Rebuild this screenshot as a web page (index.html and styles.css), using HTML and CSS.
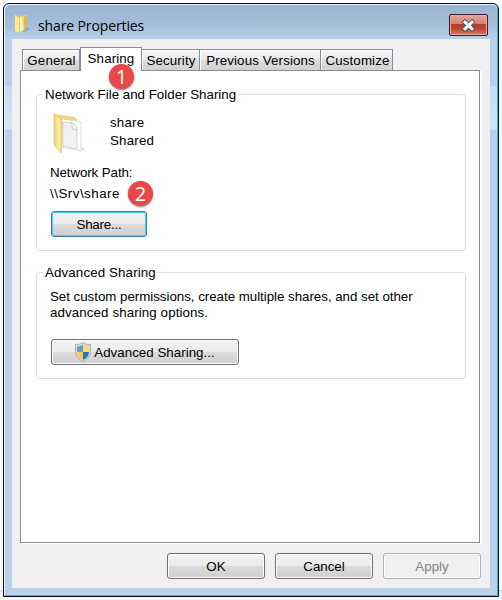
FILE: index.html
```html
<!DOCTYPE html>
<html lang="en">
<head>
<meta charset="utf-8">
<title>share Properties</title>
<link rel="stylesheet" href="styles.css">
</head>
<body>
<main class="window">
  <header class="titlebar">
    <svg class="title-icon" width="17" height="20" viewBox="0 0 17 20">
      <path d="M1 1l6 1v16l-2 1-4-2z" fill="#e6c765"/>
      <path d="M1 1l4 3v15l-4-2z" fill="#fbe999"/>
      <path d="M6 3l3-1v14l-3 2z" fill="#fff3b5"/>
      <path d="M8 2l5-1v13l-4 3z" fill="#efd47c"/>
      <path d="M10 3l3-2v13l-3 2z" fill="#e1b84f"/>
      <path d="M13 13l3 2-5 3-2-1z" fill="#8faac5"/>
    </svg>
    <h1>share Properties</h1>
    <button class="close" aria-label="Close">
      <svg width="17" height="15" viewBox="0 0 17 15">
        <path d="M5 4.200l7 6.600M12 4.200l-7 6.600" stroke="#4d5366" stroke-width="5" stroke-linecap="square"/>
        <path d="M5 4.200l7 6.600M12 4.200l-7 6.600" stroke="#f5f5f5" stroke-width="3" stroke-linecap="square"/>
      </svg>
    </button>
  </header>
  <div class="client">
    <nav class="tabs">
      <button class="tab general">General</button>
      <button class="tab sharing active">Sharing<span class="badge badge-one">1</span></button>
      <button class="tab security">Security</button>
      <button class="tab versions">Previous Versions</button>
      <button class="tab customize">Customize</button>
    </nav>
    <section class="panel">
      <fieldset class="network">
        <legend>Network File and Folder Sharing</legend>
        <div class="resource">
          <svg width="32" height="42" viewBox="0 0 32 42">
            <defs><linearGradient id="gold"><stop stop-color="#ecd074"/><stop offset=".65" stop-color="#fbeeb0"/><stop offset="1" stop-color="#e8cb69"/></linearGradient></defs>
            <path d="M1 1l20 3 3 2v6l-16 3z" fill="#eed579"/>
            <path d="M9 6l15 2 4 1 0 29-20-4z" fill="#fff" stroke="#d2d2d2" stroke-width=".8"/>
            <path d="M10 9l9 1 5 7v19l-14-3z" fill="#f1f1f1" stroke="#ccc" stroke-width=".8"/>
            <path d="M17 9c3 2 2 5 2 7l5 1c0-3-3-7-7-8z" fill="#fff" stroke="#bbb" stroke-width=".8"/>
            <path d="M1 1l8 6v26l-1 7-7-8z" fill="url(#gold)" stroke="#dfc05f" stroke-width=".6"/>
            <path d="M29 34l3 2-4 2z" fill="#ddd"/>
          </svg>
          <p><span>share</span><br><span>Shared</span></p>
        </div>
        <p class="path-label">Network Path:</p>
        <p class="path"><span>\\Srv\share</span><b class="badge">2</b></p>
        <button class="button share">Share...</button>
      </fieldset>
      <fieldset class="advanced">
        <legend>Advanced Sharing</legend>
        <p><span class="line-one">Set custom permissions, create multiple shares, and set other</span><br><span class="line-two">advanced sharing options.</span></p>
        <button class="button advanced-button">
          <svg width="16" height="20" viewBox="0 0 16 20">
            <path d="M8 .5c3 2 5 2 7.500 2v7q0 6.500-7.500 10-7.500-3.500-7.500-10v-7c2.500 0 4.500 0 7.500-2z" fill="#d7dde0" stroke="#9aa5ad" stroke-width=".8"/>
            <path d="M8 2.500c-2 1.500-4 2-6 2V10h6z" fill="#5c9fd8"/>
            <path d="M8 2.500c2 1.500 4 2 6 2V10H8z" fill="#ffe061"/>
            <path d="M2 10h6v8q-6-3-6-8z" fill="#f6cd43"/>
            <path d="M8 10h6q0 5-6 8z" fill="#2e74bd"/>
          </svg>
          <span>Advanced Sharing...</span>
        </button>
      </fieldset>
    </section>
    <footer class="actions">
      <button class="button">OK</button>
      <button class="button">Cancel</button>
      <button class="button" disabled>Apply</button>
    </footer>
  </div>
</main>
</body>
</html>
```
FILE: styles.css
```css
* { box-sizing: border-box; }
body {
  margin: 0;
  height: 600px;
  padding: 3px 2px 3px 3px;
  overflow: hidden;
  background: linear-gradient(#fff 590px, #c5dcef 590px, #c5dcef 591px, #f3f7fb 592px);
  font: 13.33px/18px "Liberation Sans", sans-serif;
  letter-spacing: 0;
  color: #000;
}
p, h1 { margin: 0; font-weight: normal; }
button { font: inherit; letter-spacing: inherit; color: inherit; margin: 0; padding: 0; }
svg { display: block; flex: none; fill: none; }
span { white-space: nowrap; }
.window {
  height: 594px;
  width: 496px;
  border: 1px solid #081018;
  border-radius: 6px 6px 0 0;
  box-shadow: inset 1px 1px #e9f4fc, inset -1px -1px #22bfd4;
  background: linear-gradient(#b9d1ea 82px, #c6dcf2 82px, #d3e5f5 125px, #b9d1ea 126px);
  padding: 1px 8px 8px;
}
.titlebar {
  height: 34px;
  margin: 0 -7px;
  padding: 9px 9px 0 9px;
  display: flex;
  align-items: flex-start;
  background: linear-gradient(#99b4d1, #a6c0dc 65%, #b9d1ea);
  border-radius: 5px 5px 0 0;
}
h1 { margin: 2px auto 0 7px; font: 14px/20px "Open Sans", sans-serif; letter-spacing: -.12px; }
.close {
  width: 39px;
  height: 22px;
  display: grid;
  place-items: center;
  border: 1px solid #431b25;
  border-radius: 2px;
  background: linear-gradient(#e7a39b, #d58178 44%, #b33c29 45%, #bd4733 70%, #d37d6d);
  box-shadow: inset 0 0 0 1px #e8aaa2;
}
.client { height: 549px; width: 478px; background: #f0f0f0; padding: 8px 9px 0 8px; }
.tabs { display: flex; height: 23px; padding-left: 2px; align-items: flex-end; }
.tab {
  height: 21px;
  white-space: nowrap;
  border: 1px solid #898c95;
  border-left-width: 0;
  border-bottom: 0;
  background: linear-gradient(#f3f3f3, #ebebeb 47%, #dedede 48%, #d1d1d1);
  box-shadow: inset 1px 1px #fff;
  letter-spacing: .12px;
  padding: 2px 0 0 1px;
}
.general { width: 58px; border-left-width: 1px; }
.sharing { width: 62px; }
.security { width: 58px; }
.versions { width: 121px; }
.customize { width: 72px; padding-left: 2px; }
.active {
  position: relative;
  height: 24px;
  margin-bottom: -1px;
  border-left-width: 1px;
  background: #fff;
  padding: 0 0 2px;
  z-index: 1;
}
.badge {
  display: grid;
  place-items: center;
  width: 25px;
  height: 25px;
  border-radius: 50%;
  background: #e94749;
  color: #fff;
  font: 20px/18px "Open Sans", sans-serif;
  letter-spacing: 0;
  box-shadow: 0 1px 2px #777;
}
.badge-one { position: absolute; left: 28px; top: 16px; }
.panel {
  height: 473px;
  width: 460px;
  padding: 15px 13px 0 15px;
  background: #fff;
  border: 1px solid #898c95;
  box-shadow: 2px 1px #fff;
}
fieldset {
  min-width: 0;
  margin: 0;
  padding: 0 0 0 14px;
  width: 430px;
  border: 1px solid #d5dfe5;
  border-radius: 4px;
}
legend { height: 17px; margin-left: -8px; padding: 0 2px; }
.network { height: 165px; }
.resource { display: flex; height: 61px; padding-top: 10px; }
.resource svg { margin-left: 2px; }
.resource p { margin: 1px 0 0 25px; letter-spacing: .2px; }
.path-label { line-height: 19px; letter-spacing: -.1px; margin: -1px 0 0 -1px; }
.path { height: 25px; display: flex; align-items: center; letter-spacing: .5px; margin: -1px 0 0 -1px; }
.path .badge { margin-left: 8px; }
.button {
  height: 26px;
  width: 98px;
  display: flex;
  justify-content: center;
  align-items: center;
  border: 1px solid #707070;
  border-radius: 3px;
  background: linear-gradient(#f2f2f2, #ebebeb 48%, #dcdcdc 49%, #cfcfcf);
  box-shadow: inset 0 0 0 1px #fcfcfc;
  padding-top: 1px;
}
.share { width: 96px; margin-top: 5px; border-color: #3c7fb1; box-shadow: inset 0 0 0 1px #49cdf5; letter-spacing: -.2px; }
.advanced { height: 115px; margin-top: 13px; }
.advanced legend { letter-spacing: .12px; }
.advanced p { line-height: 16px; padding-top: 8px; margin-left: -1px; }
.line-one { letter-spacing: -.03px; }
.line-two { letter-spacing: .1px; }
.advanced-button { width: 188px; margin-top: 18px; gap: 3px; letter-spacing: .02px; }
.advanced-button svg { margin-top: -2px; }
.actions { display: flex; justify-content: flex-end; gap: 10px; margin-top: 10px; }
.button:disabled { color: #838383; border-color: #adb2b5; background: #f0f0f0; }
```
